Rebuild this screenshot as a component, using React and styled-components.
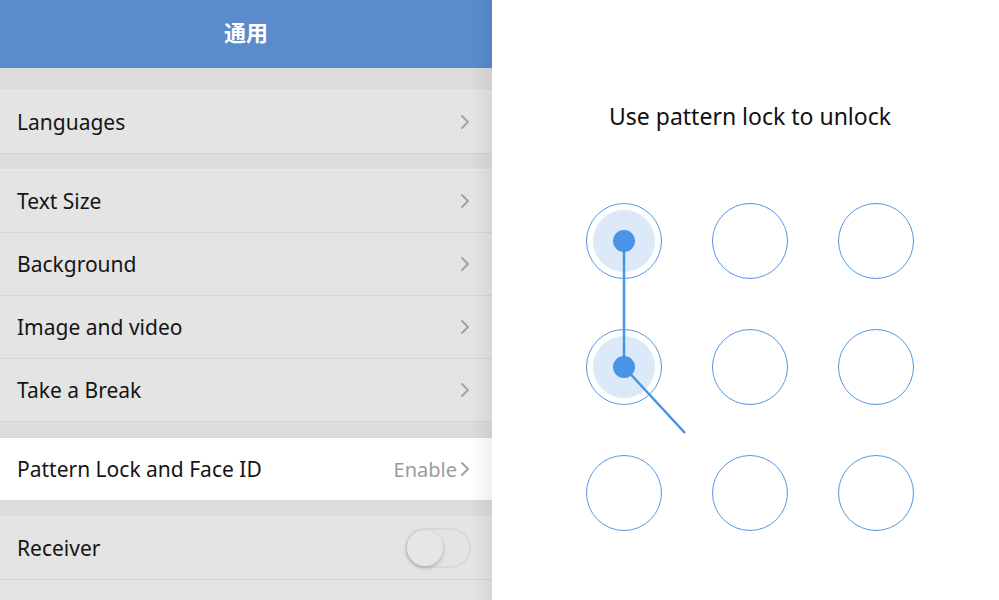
import React from 'react';
import styled, { createGlobalStyle } from 'styled-components';

const Global = createGlobalStyle`
  html, body { margin: 0; padding: 0; }
  body { font-family: "Noto Sans", "Noto Sans CJK SC", sans-serif; }
`;

const Page = styled.div`
  width: 999px;
  height: 600px;
  display: flex;
  overflow: hidden;
  background: #fff;
`;

const Settings = styled.div`
  position: relative;
  width: 492px;
  flex-shrink: 0;
  background: #dcdcdc;
  display: flex;
  flex-direction: column;
  &::after {
    content: '';
    position: absolute;
    top: 0;
    right: 0;
    bottom: 0;
    width: 22px;
    background: linear-gradient(to right, rgba(0,0,0,0), rgba(0,0,0,0.06));
    pointer-events: none;
  }
`;

const Header = styled.div`
  height: 68px;
  flex-shrink: 0;
  box-sizing: border-box;
  padding-bottom: 6px;
  background: #5a8bcd;
  color: #fff;
  display: flex;
  align-items: center;
  justify-content: center;
  font-family: "Noto Sans CJK SC", sans-serif;
  font-size: 22px;
  line-height: 28px;
  font-weight: 700;
`;

const Group = styled.div`
  margin-top: ${p => p.$gap}px;
  background: ${p => (p.$active ? '#fff' : '#e4e4e4')};
  border-top: 1px solid ${p => (p.$active ? '#d6d6d6' : '#e9e9e9')};
  border-bottom: 1px solid #d6d6d6;
`;

const Row = styled.div`
  height: 62px;
  display: flex;
  align-items: center;
  padding: 0 22px 0 17px;
  & + & {
    border-top: 1px solid #d6d6d6;
  }
`;

const Label = styled.span`
  flex: 1;
  font-size: 21px;
  color: #151515;
`;

const Value = styled.span`
  font-size: 20px;
  color: #9b9b9b;
  margin-right: 3px;
`;

const Toggle = styled.div`
  width: 62px;
  height: 36px;
  border-radius: 20px;
  border: 2px solid #d8d8d8;
  background: #e4e4e4;
  display: flex;
  align-items: center;
  margin-right: -1px;
`;

const Knob = styled.div`
  width: 36px;
  height: 36px;
  border-radius: 50%;
  background: #e6e6e6;
  box-shadow: 0 2px 4px rgba(0,0,0,0.22);
`;

const Chevron = () => (
  <svg width="10" height="16" viewBox="0 0 10 16">
    <polyline points="2,2 8,8 2,14" fill="none" stroke="#a3a3a3" strokeWidth="2" strokeLinecap="round" strokeLinejoin="round" />
  </svg>
);

const Lock = styled.div`
  flex: 1;
  display: flex;
  flex-direction: column;
  align-items: center;
  padding-top: 101px;
  padding-left: 9px;
`;

const Title = styled.div`
  font-size: 23px;
  color: #111;
  line-height: 30px;
`;

const Grid = styled.div`
  position: relative;
  margin-top: 72px;
  display: grid;
  grid-template-columns: repeat(3, 76px);
  grid-auto-rows: 76px;
  gap: 50px;
`;

const Dot = styled.div`
  width: 76px;
  height: 76px;
  box-sizing: border-box;
  border-radius: 50%;
  border: 1.5px solid #5297e6;
  display: flex;
  align-items: center;
  justify-content: center;
`;

const Halo = styled.div`
  width: 62px;
  height: 62px;
  border-radius: 50%;
  background: #dbe9f8;
`;

const Trail = styled.svg`
  position: absolute;
  left: 0;
  top: 0;
  overflow: visible;
  pointer-events: none;
`;

const settingsGroups = [
  { gap: 22, rows: [{ label: 'Languages' }] },
  { gap: 15, rows: [{ label: 'Text Size' }, { label: 'Background' }, { label: 'Image and video' }, { label: 'Take a Break' }] },
  { gap: 15, active: true, rows: [{ label: 'Pattern Lock and Face ID', value: 'Enable' }] },
  { gap: 15, rows: [{ label: 'Receiver', toggle: true }, { label: '' }] },
];

const selected = [0, 3];

export default function App() {
  return (
    <Page>
      <Global />
      <Settings>
        <Header>通用</Header>
        {settingsGroups.map((g, i) => (
          <Group key={i} $gap={g.gap} $active={g.active}>
            {g.rows.map((r, j) => (
              <Row key={j}>
                <Label>{r.label}</Label>
                {r.value && <Value>{r.value}</Value>}
                {r.toggle ? (
                  <Toggle><Knob /></Toggle>
                ) : r.label ? (
                  <Chevron />
                ) : null}
              </Row>
            ))}
          </Group>
        ))}
      </Settings>
      <Lock>
        <Title>Use pattern lock to unlock</Title>
        <Grid>
          {Array.from({ length: 9 }).map((_, i) => (
            <Dot key={i}>{selected.includes(i) && <Halo />}</Dot>
          ))}
          <Trail width="328" height="328">
            <polyline points="38,38 38,164 99,230" fill="none" stroke="#4a94e8" strokeWidth="2.5" />
            <circle cx="38" cy="38" r="11" fill="#4a94e8" />
            <circle cx="38" cy="164" r="11" fill="#4a94e8" />
          </Trail>
        </Grid>
      </Lock>
    </Page>
  );
}
